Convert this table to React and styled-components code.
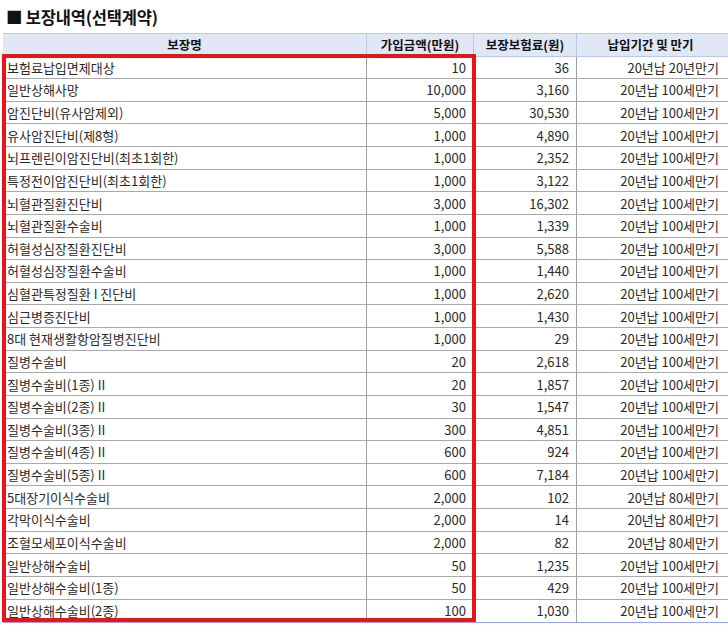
import React from "react";
import styled, { createGlobalStyle } from "styled-components";

const GlobalStyle = createGlobalStyle`
  html, body {
    margin: 0;
    padding: 0;
    background: #ffffff;
    font-family: "Noto Sans CJK KR", "Noto Sans", sans-serif;
    color: #222;
    overflow: hidden;
  }
`;

const Page = styled.div`
  position: relative;
  width: 728px;
  height: 627px;
  overflow: hidden;
`;

const Title = styled.h2`
  margin: 0;
  height: 33px;
  padding-left: 6px;
  display: flex;
  align-items: center;
  font-size: 16.5px;
  font-weight: 700;
  letter-spacing: -0.2px;
  color: #111;
`;

const Table = styled.div`
  margin-left: 3px;
  width: 735px;
  border-top: 1px solid #b9c8e4;
  border-bottom: 1px solid #8faadc;
`;

const Row = styled.div`
  display: grid;
  grid-template-columns: 363px 107px 103px 1fr;
  height: ${(p) => (p.$head ? "22.5px" : "22.64px")};
  box-sizing: border-box;
  border-bottom: 1px solid ${(p) => (p.$head ? "#b9c8e4" : "#a9a9a9")};
  background: ${(p) => (p.$head ? "#e0e8f6" : "#fff")};
  &:last-child {
    border-bottom: none;
  }
`;

const Cell = styled.div`
  display: flex;
  align-items: center;
  justify-content: ${(p) =>
    p.$align === "left" ? "flex-start" : p.$align === "center" ? "center" : "flex-end"};
  padding: ${(p) => (p.$align === "left" ? "0 0 0 4px" : "0 7px 0 0")};
  border-left: ${(p) => (p.$first ? "none" : "1px solid #a0a0a0")};
  font-size: 13px;
  color: #2a2a2a;
  white-space: nowrap;
  overflow: hidden;
`;

const HeadCell = styled(Cell)`
  justify-content: center;
  padding: 0;
  font-weight: 700;
  font-size: 12.5px;
  color: #111;
  border-left-color: #b9c8e4;
`;

const TermCell = styled(Cell)`
  padding-right: 19px;
`;

const Highlight = styled.div`
  position: absolute;
  left: 2px;
  top: 54px;
  width: 474px;
  height: 568px;
  box-sizing: border-box;
  border: 4px solid #e8141c;
  pointer-events: none;
`;

const rows = [
  ["보험료납입면제대상", "10", "36", "20년납 20년만기"],
  ["일반상해사망", "10,000", "3,160", "20년납 100세만기"],
  ["암진단비(유사암제외)", "5,000", "30,530", "20년납 100세만기"],
  ["유사암진단비(제8형)", "1,000", "4,890", "20년납 100세만기"],
  ["뇌프렌린이암진단비(최초1회한)", "1,000", "2,352", "20년납 100세만기"],
  ["특정전이암진단비(최초1회한)", "1,000", "3,122", "20년납 100세만기"],
  ["뇌혈관질환진단비", "3,000", "16,302", "20년납 100세만기"],
  ["뇌혈관질환수술비", "1,000", "1,339", "20년납 100세만기"],
  ["허혈성심장질환진단비", "3,000", "5,588", "20년납 100세만기"],
  ["허혈성심장질환수술비", "1,000", "1,440", "20년납 100세만기"],
  ["심혈관특정질환 I 진단비", "1,000", "2,620", "20년납 100세만기"],
  ["심근병증진단비", "1,000", "1,430", "20년납 100세만기"],
  ["8대 현재생활항암질병진단비", "1,000", "29", "20년납 100세만기"],
  ["질병수술비", "20", "2,618", "20년납 100세만기"],
  ["질병수술비(1종) II", "20", "1,857", "20년납 100세만기"],
  ["질병수술비(2종) II", "30", "1,547", "20년납 100세만기"],
  ["질병수술비(3종) II", "300", "4,851", "20년납 100세만기"],
  ["질병수술비(4종) II", "600", "924", "20년납 100세만기"],
  ["질병수술비(5종) II", "600", "7,184", "20년납 100세만기"],
  ["5대장기이식수술비", "2,000", "102", "20년납 80세만기"],
  ["각막이식수술비", "2,000", "14", "20년납 80세만기"],
  ["조혈모세포이식수술비", "2,000", "82", "20년납 80세만기"],
  ["일반상해수술비", "50", "1,235", "20년납 100세만기"],
  ["일반상해수술비(1종)", "50", "429", "20년납 100세만기"],
  ["일반상해수술비(2종)", "100", "1,030", "20년납 100세만기"],
];

export default function App() {
  return (
    <Page>
      <GlobalStyle />
      <Title>■ 보장내역(선택계약)</Title>
      <Table>
        <Row $head>
          <HeadCell $first>보장명</HeadCell>
          <HeadCell>가입금액(만원)</HeadCell>
          <HeadCell>보장보험료(원)</HeadCell>
          <HeadCell style={{ paddingRight: 14 }}>납입기간 및 만기</HeadCell>
        </Row>
        {rows.map(([name, amount, premium, term]) => (
          <Row key={name}>
            <Cell $first $align="left">{name}</Cell>
            <Cell>{amount}</Cell>
            <Cell>{premium}</Cell>
            <TermCell>{term}</TermCell>
          </Row>
        ))}
      </Table>
      <Highlight />
    </Page>
  );
}
